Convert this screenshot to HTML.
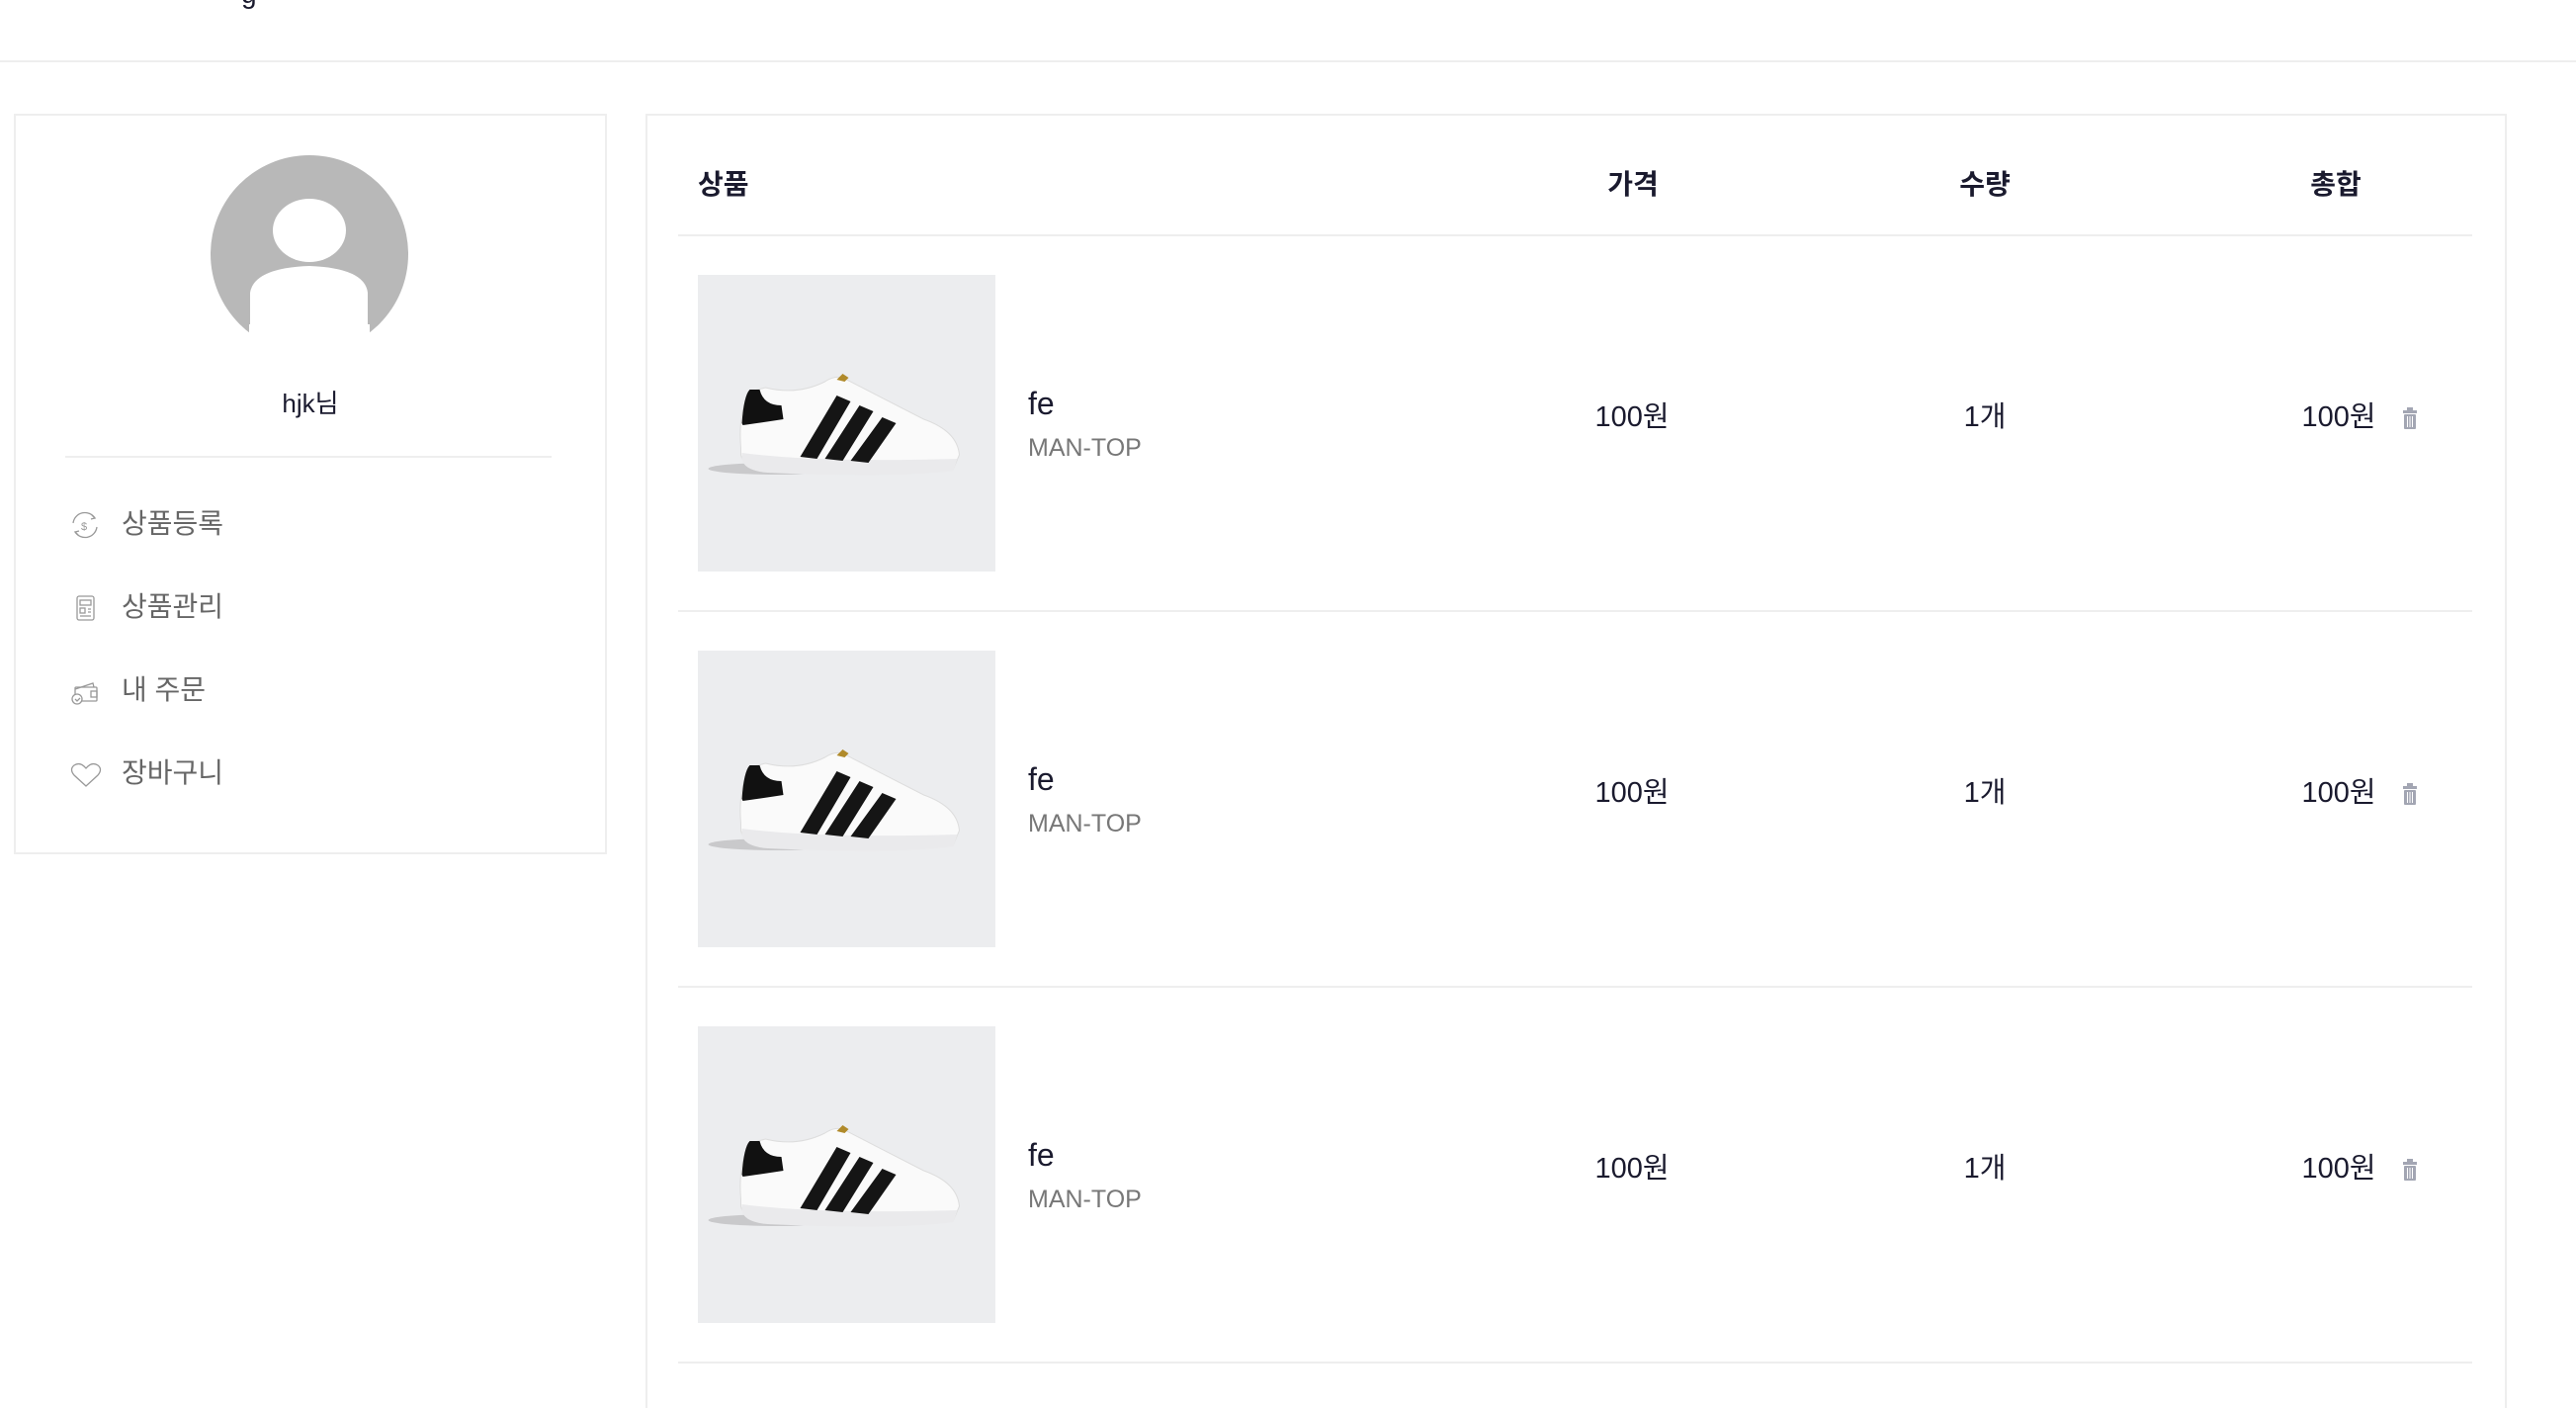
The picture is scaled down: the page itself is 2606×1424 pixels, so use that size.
<!DOCTYPE html>
<html><head><meta charset="utf-8"><style>
*{margin:0;padding:0;box-sizing:border-box}
html,body{width:2606px;height:1424px;overflow:hidden}
body{background:#fff;position:relative;font-family:"Liberation Sans","Noto Sans CJK KR",sans-serif;color:#1a1a2e}
.abs{position:absolute}
.hl{position:absolute;left:0;width:2606px;top:61px;height:2px;background:#eee}
.side{left:14px;top:115px;width:600px;height:749px;border:2px solid #eee}
.main{left:653px;top:115px;width:1883px;height:1330px;border:2px solid #eee}
.menu{position:absolute;left:107px;font-size:28px;color:#666;line-height:1}
.mi{position:absolute;left:54px}
.th{position:absolute;top:173px;font-size:28px;font-weight:bold;line-height:1}
.c{transform:translateX(-50%)}
.line{position:absolute;left:686px;width:1815px;height:2px;background:#eee}
.img{position:absolute;left:706px;width:301px;height:300px;background:#ecedef}
.fe{position:absolute;left:1040px;font-size:32px;line-height:1}
.mt{position:absolute;left:1040px;font-size:25px;color:#777;line-height:1}
.v{position:absolute;font-size:29px;line-height:1}
</style></head><body>
<div class="abs" style="left:244px;top:-22px;font-size:28px">g</div>
<div class="hl"></div>
<div class="abs side">
 <svg class="abs" style="left:196px;top:39px" width="202" height="202" viewBox="0 0 202 202">
  <defs><clipPath id="cp"><circle cx="101" cy="101" r="100"/></clipPath></defs>
  <circle cx="101" cy="101" r="100" fill="#b8b8b8"/>
  <ellipse cx="101" cy="77" rx="37" ry="32" fill="#fff"/>
  <path d="M41,202 L41,140 Q45,115 101,113 Q157,115 160,140 L160,202 Z" fill="#fff" clip-path="url(#cp)"/>
  <rect x="40" y="172" width="122" height="40" fill="#fff"/>
 </svg>
 <div class="abs" style="left:0;width:596px;text-align:center;top:271px;font-size:26px">hjk님</div>
 <div class="abs" style="left:50px;top:344px;width:492px;height:2px;background:#eee"></div>
 <svg class="mi" style="top:398px" width="32" height="32" viewBox="0 0 32 32" fill="none" stroke="#999" stroke-width="1.3"><path d="M4,14 A12,12 0 0 1 26,9 M28,18 A12,12 0 0 1 6,23"/><path d="M23,6 L26,9 L22,10 M9,26 L6,23 L10,22"/><text x="12" y="21" font-size="11" fill="#999" stroke="none">$</text></svg>
 <div class="menu" style="top:399px">상품등록</div>
 <svg class="mi" style="top:482px" width="32" height="34" viewBox="0 0 32 34" fill="none" stroke="#999" stroke-width="1.3"><rect x="8" y="4" width="17" height="24" rx="2"/><rect x="11" y="8" width="11" height="5"/><rect x="11" y="16" width="5" height="5"/><path d="M19,17h3M19,20h3M11,24h11"/></svg>
 <div class="menu" style="top:483px">상품관리</div>
 <svg class="mi" style="top:566px" width="34" height="32" viewBox="0 0 34 32" fill="none" stroke="#999" stroke-width="1.3"><path d="M6,14 L24,8 L25,12"/><rect x="6" y="12" width="22" height="14" rx="1"/><rect x="22" y="16" width="6" height="6"/><circle cx="8" cy="24" r="5" fill="#fff"/><path d="M6,24l2,2 3,-3"/></svg>
 <div class="menu" style="top:567px">내 주문</div>
 <svg class="mi" style="top:652px" width="34" height="30" viewBox="0 0 34 30" fill="none" stroke="#999" stroke-width="1.3"><path d="M17,26 L5,15 Q0,9 5,5 Q11,1 17,8 Q23,1 29,5 Q34,9 29,15 Z"/></svg>
 <div class="menu" style="top:651px">장바구니</div>
</div>
<div class="abs main"></div>
<div class="th" style="left:706px">상품</div>
<div class="th c" style="left:1652px">가격</div>
<div class="th c" style="left:2008px">수량</div>
<div class="th c" style="left:2363px">총합</div>
<div class="line" style="top:237px"></div>
<div id="rows"></div>
<script>
var shoe='<svg width="301" height="300" viewBox="0 0 300 300"><ellipse cx="80" cy="196" rx="70" ry="6" fill="#c9c9cb"/><path d="M43,175 Q40,140 52,118 L68,114 Q100,122 128,108 Q140,100 150,106 L228,146 Q262,158 264,182 L258,196 Q200,205 70,198 Q46,196 43,182 Z" fill="#fafafa" stroke="#ddd"/><path d="M44,180 Q120,190 262,186 L258,198 Q200,206 70,200 Q46,198 44,186Z" fill="#eaeaec"/><path d="M44,150 Q46,122 52,116 L62,116 Q66,132 84,132 L86,146 Q60,150 45,152 Z" fill="#111"/><path d="M103,184 L140,122 L154,128 L120,186Z M128,186 L163,132 L177,138 L146,188Z M154,188 L186,144 L200,150 L172,190Z" fill="#151515"/><path d="M140,106 L146,100 L152,104 L148,108Z" fill="#b08a2a"/></svg>';
var h='';
for(var i=0;i<3;i++){var t=238+i*380;
h+='<div class="img" style="top:'+(t+40)+'px">'+shoe+'</div>';
h+='<div class="fe" style="top:'+(t+154)+'px">fe</div>';
h+='<div class="mt" style="top:'+(t+203)+'px">MAN-TOP</div>';
h+='<div class="v c" style="left:1651px;top:'+(t+170)+'px">100원</div>';
h+='<div class="v c" style="left:2008px;top:'+(t+170)+'px">1개</div>';
h+='<div class="v c" style="left:2366px;top:'+(t+170)+'px">100원</div>';
h+='<svg class="abs" style="left:2430px;top:'+(t+173)+'px" width="16" height="24" viewBox="0 0 16 24"><rect x="5" y="1" width="6" height="3" fill="#a3a6b3"/><rect x="1" y="4" width="14" height="3" fill="#a3a6b3"/><rect x="2" y="8" width="12" height="15" rx="1" fill="#a3a6b3"/><path d="M5.5,10v11M8,10v11M10.5,10v11" stroke="#fff" stroke-width="1"/></svg>';
h+='<div class="line" style="top:'+(t+379)+'px"></div>';}
document.getElementById('rows').innerHTML=h;
</script>
</body></html>
